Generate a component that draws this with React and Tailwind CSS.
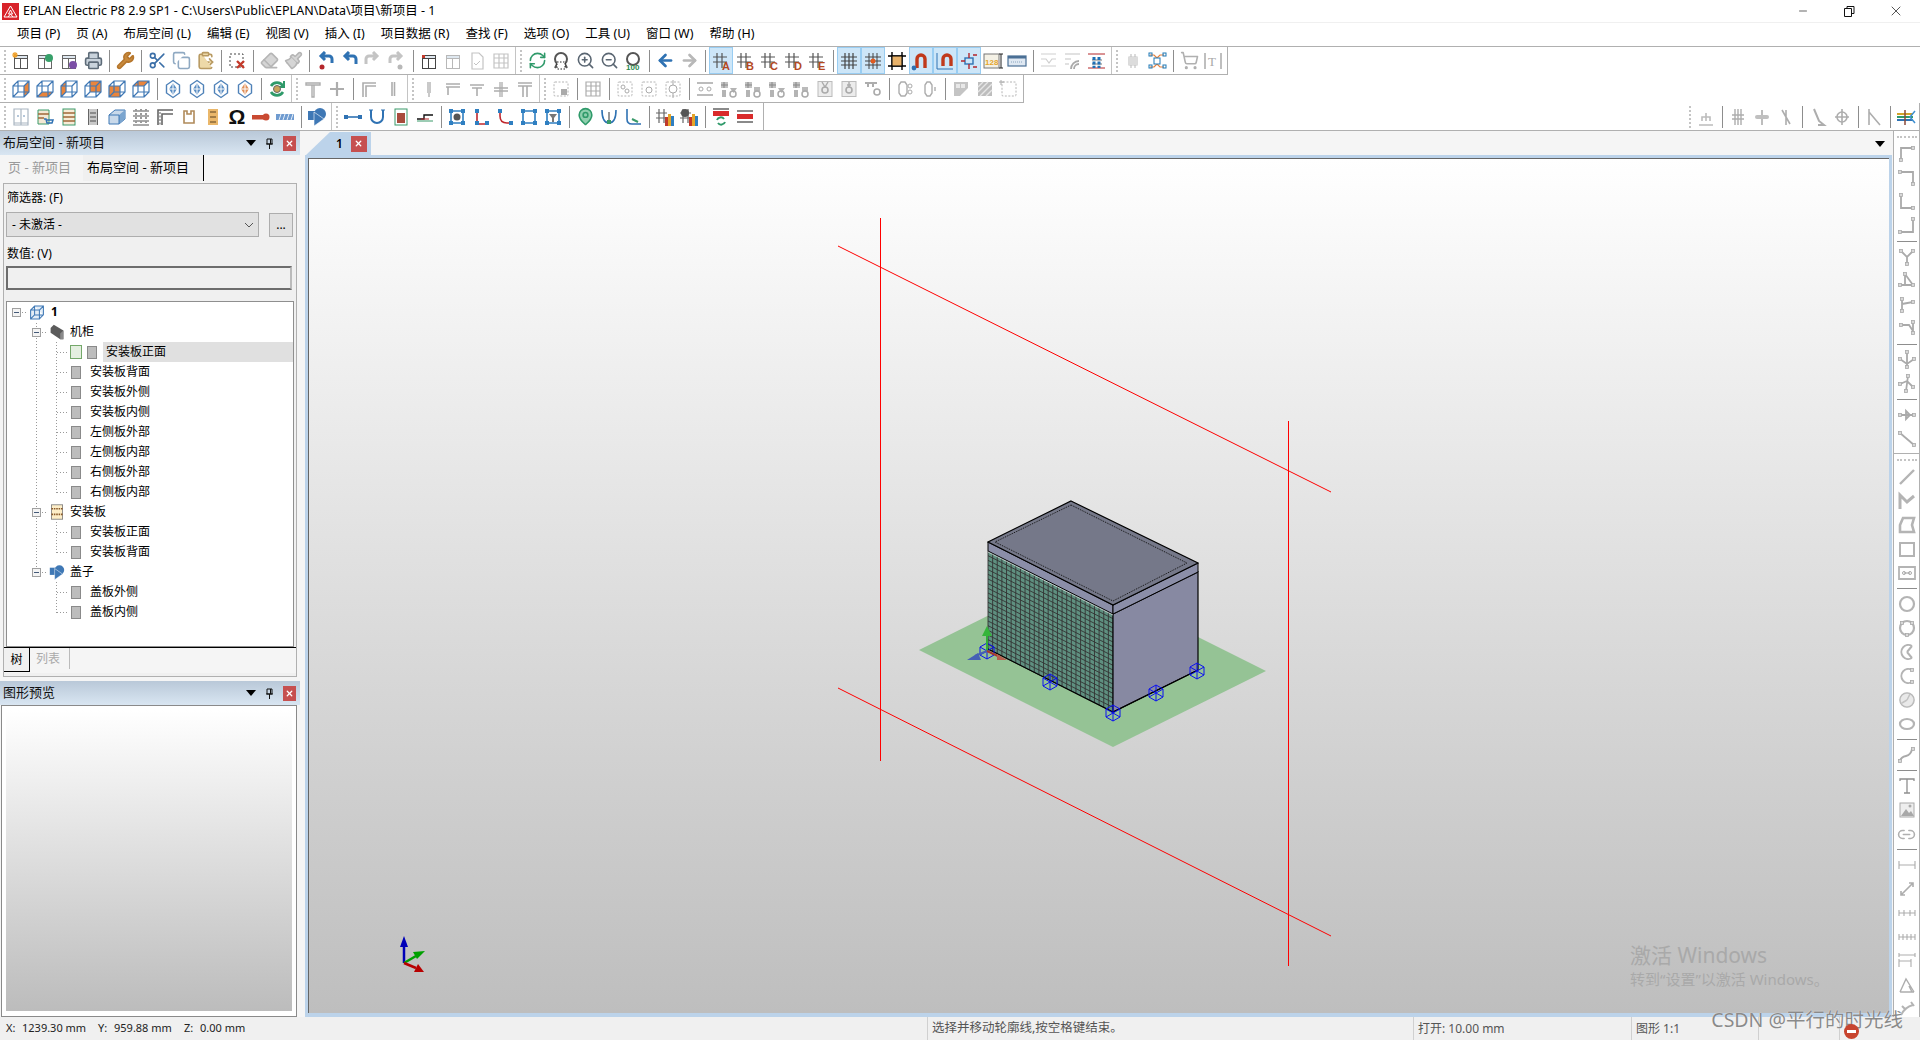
import {
  Printer, Wrench, Scissors, Copy, ClipboardPaste, Eraser, Paintbrush, RefreshCw,
  ZoomIn, ZoomOut, ArrowLeft, ArrowRight, MapPin, ShoppingCart, Link2, Minus, X,
} from "lucide-react";

const uiFont = "font-['Noto_Sans','Noto_Sans_CJK_SC',sans-serif]";

const Svg = ({ children, s = 20 }) => (
  <svg viewBox="0 0 20 20" width={s} height={s} fill="none" className="block">
    {children}
  </svg>
);

// gray line icon, most of the disabled toolbar buttons are this
const G = ({ d, c = "#adadad", w = 1.6, children }) => (
  <Svg>
    <path d={d} stroke={c} strokeWidth={w} />
    {children}
  </Svg>
);

const L = (Icon, color, fill = "none") => <Icon size={19} color={color} fill={fill} strokeWidth={2} />;

const Win = ({ mark, c = "#666" }) => (
  <Svg>
    <rect x="3.5" y="4.5" width="13" height="13" fill="#fff" stroke={c} />
    <rect x="3.5" y="4.5" width="13" height="3" fill="#dfe8f0" stroke={c} />
    <path d="M9.5 7.5v10" stroke={c} />
    {mark}
  </Svg>
);

const GridL = ({ l, c = "#b5491e" }) => (
  <Svg>
    <path d="M2 6h14M2 11h14M6 2v15M11 2v15" stroke="#555" strokeWidth="1.2" />
    <text x="11" y="19" fontSize="11" fontWeight="700" fill={c} fontFamily="Liberation Sans">
      {l}
    </text>
  </Svg>
);

const faces = {
  right: "13,7 18,2 18,13 13,18",
  left: "2,7 7,2 7,13 2,18",
  bottom: "2,18 7,13 18,13 13,18",
  back: "7,2 18,2 18,13 7,13",
  front: "2,7 13,7 13,18 2,18",
  top: "2,7 7,2 18,2 13,7",
};

const Cube = ({ f }) => (
  <Svg>
    {f && <polygon points={faces[f]} fill="#e9853c" />}
    <path d="M2 7h11v11H2zM2 7l5-5h11v11l-5 5M13 7l5-5M7 2v11H18M7 13l-5 5" stroke="#3f78b5" strokeWidth="1.2" />
  </Svg>
);

const Hex = ({ f = "0" }) => (
  <Svg>
    <polygon points="10,1.5 16.5,6 16.5,14 10,18.5 3.5,14 3.5,6" stroke="#4f82b8" strokeWidth="1.4" fill="#fff" />
    <polygon points="10,4 14,10 10,16 6,10" fill={f === "0" ? "#5c8fc4" : "#e0905a"} />
    <path d="M6 10h8M10 4v12" stroke="#fff" />
  </Svg>
);

const Shapes = ({ s = 20 }) => (
  <Svg s={s}>
    <rect x="1" y="4" width="9" height="9" fill="#3f78b5" />
    <circle cx="13" cy="7" r="6" fill="#3f78b5" />
    <polygon points="7,5 7,19 17,12" fill="#3f78b5" stroke="#fff" strokeWidth=".6" />
  </Svg>
);

const Bracket = ({ k }) => (
  <Svg>
    <path
      d={{ a: "M4 4v12h12V4H4z", b: "M6 3v14h10", d: "M4 4h12v12H4z", e: "M4 4h12v12H4z" }[k]}
      stroke={k === "b" ? "#c0272d" : "#2f7fc1"}
      strokeWidth="1.6"
    />
    {(k === "b" ? [[6, 4], [6, 16], [16, 16]] : [[4, 4], [16, 4], [4, 16], [16, 16]]).map(([x, y], i) => (
      <rect key={i} x={x - 2} y={y - 2} width="4" height="4" fill="#2f7fc1" />
    ))}
    {k === "a" && <circle cx="10" cy="10" r="3.5" fill="#555" />}
    {k === "e" && <polygon points="6,7 14,7 11,11 11,15 9,15 9,11" fill="#777" />}
  </Svg>
);

const Dash = ({ children }) => (
  <Svg>
    <rect x="3" y="3" width="14" height="14" rx="1" stroke="#b4b4b4" strokeDasharray="2 1.5" />
    {children}
  </Svg>
);

const Sym = ({ inner }) => (
  <Svg>
    <rect x="3" y="2.5" width="14" height="15" fill="#ececec" stroke="#bbb" />
    <circle cx="10" cy="11" r="3" stroke="#aaa" strokeWidth="1.6" />
    <path d={inner || "M7 3l3 5 3-5"} stroke="#aaa" strokeWidth="1.4" />
  </Svg>
);

const Mix = ({ k }) => (
  <Svg>
    <rect x="2" y="3" width="7" height="6" fill="#c2c2c2" />
    <path d="M2 6h7M5 3v6" stroke="#888" />
    {k > 1 ? <path d="M11 9h7l-3.5 5z" fill="#b4b4b4" /> : <rect x="11" y="8" width="6" height="4" fill="#bbb" />}
    <circle cx="14" cy="15" r="3" stroke="#aaa" strokeWidth="1.5" />
    <rect x="3" y="11" width="4" height="7" fill="#b4b4b4" />
  </Svg>
);

const Panel2 = ({ c = "#d92b2b" }) => (
  <Svg>
    <path d="M2 4h16" stroke="#8a8a8a" strokeWidth="2" />
    <rect x="2" y="7" width="16" height="5" fill={c} />
    <path d="M2 15h16" stroke="#8a8a8a" strokeWidth="2" />
  </Svg>
);

const Bars = ({ gear }) => (
  <Svg>
    <path d="M1 6h11M1 11h11M4 2v14M9 2v14" stroke="#666" strokeWidth="1.2" />
    {gear && <circle cx="6" cy="6" r="4" fill="#555" />}
    <rect x="10" y="10" width="3" height="9" fill="#c0392b" />
    <rect x="13" y="7" width="3" height="12" fill="#e5a52a" />
    <rect x="16" y="9" width="3" height="10" fill="#2f7fc1" />
  </Svg>
);

const SEP = "sep";
const GRIP = "grip";

const row1 = [
  [
    <Win c="#555" mark={<path d="M4 1v6M1 4h6M2 2l4 4M6 2L2 6" stroke="#eea02a" strokeWidth="1.2" />} />,
    <Win mark={<circle cx="14" cy="7" r="4" fill="#37a06a" />} />,
    <Win mark={<circle cx="14" cy="14" r="4" fill="#7b4fa6" />} />,
    L(Printer, "#5d6b78", "#c9d3dc"),
    SEP,
    L(Wrench, "#b5762c", "#c98a3c"),
    SEP,
    L(Scissors, "#3b6fa8"),
    L(Copy, "#8fa9c2", "#fff"),
    L(ClipboardPaste, "#b89a62", "#edd9a8"),
    SEP,
    <Svg>
      <rect x="3" y="3" width="13" height="13" stroke="#444" strokeDasharray="2 2" />
      <path d="M10 10l7 7M17 10l-7 7" stroke="#c43a2a" strokeWidth="2.4" />
    </Svg>,
    SEP,
    L(Eraser, "#b5b5b5", "#d5d5d5"),
    L(Paintbrush, "#b5b5b5", "#d5d5d5"),
    SEP,
    <Svg>
      <path d="M17 12V8a3 3 0 0 0-3-3H7M10 1L6 5l4 4" stroke="#2f72b3" strokeWidth="3" />
      <circle cx="7" cy="16" r="2.5" fill="#b4262b" />
    </Svg>,
    <Svg>
      <path d="M17 13V8a3 3 0 0 0-3-3H7M10 1L6 5l4 4" stroke="#2f72b3" strokeWidth="3" />
    </Svg>,
    <Svg>
      <path d="M3 13V8a3 3 0 0 1 3-3h7M10 1l4 4-4 4" stroke="#c4c4c4" strokeWidth="3" />
    </Svg>,
    <Svg>
      <path d="M3 12V8a3 3 0 0 1 3-3h7M10 1l4 4-4 4" stroke="#c4c4c4" strokeWidth="3" />
      <circle cx="13" cy="16" r="2.5" fill="#b8b8b8" />
    </Svg>,
    SEP,
    <Win c="#444" mark={<rect x="3" y="4" width="3" height="3" fill="#c43a2a" />} />,
    <Win c="#b8b8b8" />,
    <G d="M5 2h7l4 4v12H5z" c="#c4c4c4" w={1.2}>
      <path d="M7 12l2 2 4-4" stroke="#c4c4c4" />
    </G>,
    <G d="M3 3h14v14H3zM3 7h14M3 12h14M8 3v14M13 3v14" c="#c4c4c4" w={1.2} />,
  ],
  [
    L(RefreshCw, "#2f9a6a"),
    <Svg>
      <circle cx="10" cy="8" r="6" stroke="#555" strokeWidth="2" />
      <path d="M4 17l2-4M16 17l-2-4" stroke="#555" strokeWidth="2" />
      <rect x="6" y="11" width="8" height="7" fill="#fff" stroke="#222" strokeDasharray="1.5 1.5" />
    </Svg>,
    L(ZoomIn, "#5a6672"),
    L(ZoomOut, "#5a6672"),
    <Svg>
      <circle cx="10" cy="8" r="6" stroke="#555" strokeWidth="2" />
      <text x="3" y="19" fontSize="8" fontWeight="700" fill="#2b8a4e" fontFamily="Liberation Sans">100</text>
    </Svg>,
    SEP,
    <ArrowLeft size={19} color="#2f72b3" strokeWidth={3.4} />,
    <ArrowRight size={19} color="#b8b8b8" strokeWidth={3.4} />,
    SEP,
    { el: <GridL l="A" />, active: true },
    <GridL l="B" />,
    <GridL l="C" />,
    <GridL l="D" />,
    <GridL l="E" />,
    SEP,
    { el: <G d="M2 6h16M2 10h16M2 14h16M6 2v16M10 2v16M14 2v16" c="#444" w={1.2} />, active: true },
    {
      el: (
        <G d="M2 6h16M2 10h16M2 14h16M6 2v16M10 2v16M14 2v16" c="#444" w={1}>
          <circle cx="10" cy="10" r="2.5" fill="#e05a1f" />
        </G>
      ),
      active: true,
    },
    <G d="M5 5h10v10H5zM5 1v18M15 1v18M1 5h18M1 15h18" c="#000" w={1.4}>
      <rect x="5" y="5" width="10" height="10" fill="#e8b26a" stroke="#000" />
    </G>,
    { el: <Svg><path d="M6 17V8a4 4 0 0 1 8 0v9" stroke="#c0391b" strokeWidth="3.4" /><circle cx="3" cy="17" r="2.4" fill="#2f72b3" /></Svg>, active: true },
    { el: <Svg><path d="M2 2v16h16" stroke="#2f72b3" /><path d="M8 15V8a4 4 0 0 1 8 0v7" stroke="#c0391b" strokeWidth="3.4" /></Svg>, active: true },
    { el: <Svg><rect x="6" y="7" width="8" height="6" stroke="#2f72b3" strokeWidth="1.4" /><path d="M10 2v5M10 13v5M14 4h4M14 16h4M2 10h4" stroke="#b4262b" strokeWidth="1.4" /></Svg>, active: true },
    <Svg>
      <rect x="1" y="3" width="15" height="14" fill="#f4f1e6" stroke="#777" />
      <text x="2" y="14" fontSize="8" fontWeight="700" fill="#e5a52a" fontFamily="Liberation Sans">128</text>
      <path d="M18 3v14M16 3h4M16 17h4" stroke="#222" />
    </Svg>,
    <Svg>
      <rect x="1" y="5" width="18" height="10" fill="#dfe8f2" stroke="#4a6f95" strokeWidth="1.2" />
      <rect x="1" y="5" width="18" height="2.5" fill="#4a6f95" />
      <path d="M4 11h12" stroke="#8aa5bf" strokeDasharray="1 1" />
    </Svg>,
    SEP,
    <G d="M2 3h15M2 8h5l3 4 3-4h4M2 15h15" c="#cfcfcf" w={1.2} />,
    <G d="M2 3h15M2 8h6M2 13h4" c="#c4c4c4" w={1.2}>
      <path d="M8 18a8 8 0 0 1 8-8M11 18a5 5 0 0 1 5-5" stroke="#aaa" strokeWidth="1.8" />
    </G>,
    <Svg>
      <path d="M1 3h17M1 17h17" stroke="#b4262b" />
      <path d="M5 9h10M5 13h10" stroke="#777" />
      <path d="M7 6v11M12 6v11" stroke="#1f6fb5" strokeWidth="3" strokeDasharray="3 1.4" />
    </Svg>,
  ],
  [
    <G d="M6 6h8v8H6zM8 3v3M12 3v3M8 14v3M12 14v3" c="#c4c4c4" w={1.2}>
      <rect x="6" y="6" width="8" height="8" fill="#dcdcdc" />
    </G>,
    <Svg>
      <path d="M3 4h4l3 3M17 4h-4l-3 3M3 16h4l3-3M17 16h-4l-3-3" stroke="#e8803a" strokeWidth="1.2" />
      <rect x="7" y="7" width="6" height="6" fill="#fff" stroke="#1f78b5" />
      {[[2, 3], [16, 3], [2, 15], [16, 15]].map(([x, y], i) => (
        <rect key={i} x={x} y={y - 1} width="3" height="3" stroke="#1f78b5" />
      ))}
    </Svg>,
    SEP,
    L(ShoppingCart, "#b0b0b0"),
    <G d="M2 2v16M18 2v16" c="#aaa" w={1.5}>
      <text x="5" y="15" fontSize="13" fill="#a8a8a8" fontFamily="Liberation Serif">T</text>
    </G>,
  ],
];

const row2 = [
  [
    <Cube f="right" />,
    <Cube f="bottom" />,
    <Cube f="left" />,
    <Cube f="back" />,
    <Cube f="front" />,
    <Cube f="top" />,
    SEP,
    <Hex />,
    <Hex />,
    <Hex />,
    <Hex f="1" />,
    SEP,
    <Svg>
      <path d="M16 7a7 7 0 0 0-12 0M4 13a7 7 0 0 0 12 0" stroke="#2f9a6a" strokeWidth="2.6" />
      <path d="M17 2v6h-6" stroke="#2f9a6a" strokeWidth="2" />
      <circle cx="10" cy="10" r="3.5" fill="#c9a45a" stroke="#666" />
    </Svg>,
  ],
  [
    <G d="M3 4h14v2H3zM9 6v12h2V6" w={1.4} />,
    <G d="M3 10h14M10 3v14" w={2.2} />,
    SEP,
    <G d="M4 18V4h13M7 18V7h10" />,
    <G d="M9 3v14M11.500 3v14" />,
  ],
  [
    <G d="M9 3v11M11 3v11M10 14v4" w={1.3} />,
    <G d="M3 5h14M3 8h14M5 8v8" />,
    <G d="M3 6h14M5 9h10M10 9v8" />,
    <G d="M3 9h14M3 12h14M9 3v15M11 3v15" w={1.3} />,
    <G d="M3 4h14M3 7h14M8 7v11M12 7v11" />,
  ],
  [
    <Dash>
      <rect x="10" y="10" width="6" height="6" fill="#aaa" />
    </Dash>,
    SEP,
    <G d="M3 3h14v14H3zM3 7h14M8 3v14M13 3v14M3 12h14" w={1.2} />,
    SEP,
    <Dash>
      <circle cx="8" cy="8" r="2" stroke="#aaa" />
      <circle cx="12" cy="12" r="2" stroke="#aaa" />
    </Dash>,
    <Dash>
      <circle cx="10" cy="11" r="3" stroke="#aaa" />
    </Dash>,
    <Dash>
      <circle cx="10" cy="10" r="4" stroke="#aaa" />
      <path d="M10 1v5M10 14v5" stroke="#aaa" />
    </Dash>,
    SEP,
    <G d="M2 4h16M2 16h16" w={2} c="#bcbcbc">
      <circle cx="6" cy="10" r="2" stroke="#aaa" />
      <circle cx="14" cy="10" r="2" stroke="#aaa" />
    </G>,
    <Mix k={2} />,
    <Mix k={1} />,
    <Mix k={2} />,
    <Mix k={1} />,
    <Sym />,
    <Sym inner="M10 3v5M8 6h4" />,
    <G d="M2 4h12M5 4v4M10 4v4" w={2}>
      <circle cx="14" cy="13" r="3" stroke="#aaa" strokeWidth="1.6" />
    </G>,
    SEP,
    <G d="M6 3h4l2 3v8l-2 3H6l-2-3V6z" w={1.4}>
      <circle cx="15" cy="7" r="2" stroke="#aaa" />
      <circle cx="15" cy="13" r="2" stroke="#aaa" />
    </G>,
    <G d="M8 3h3l2 3v8l-2 3H8l-2-3V6zM16 8v4" w={1.4} />,
    SEP,
    <Svg>
      <polygon points="3,3 17,3 17,9 9,17 3,17" fill="#c4c4c4" />
      <rect x="5" y="5" width="4" height="4" fill="#e8e8e8" />
      <rect x="10" y="5" width="4" height="4" fill="#e8e8e8" />
    </Svg>,
    <Svg>
      <rect x="3" y="3" width="14" height="14" fill="#bdbdbd" />
      <path d="M3 13L13 3M5 17L17 5M3 8l5-5M11 17l6-6" stroke="#e6e6e6" strokeWidth="1.4" />
    </Svg>,
    <Dash>
      <path d="M2 1v5M0 3h5" stroke="#aaa" />
    </Dash>,
  ],
];

const row3 = [
  [
    <G d="M3 2h14v16H3zM10 2v16M3 16h14" c="#aab6c2" w={1.2}>
      <path d="M6 9h2M12 9h2" stroke="#6b8fb5" />
    </G>,
    <Svg>
      <path d="M3 3h11v14H3z" fill="#f3e8d4" stroke="#3a9a6a" />
      <path d="M3 7h11M3 11h6" stroke="#a0683a" strokeWidth="1.5" />
      <path d="M9 12h2l1 4h5l1-3h-6" stroke="#2f72b3" strokeWidth="1.5" />
    </Svg>,
    <Svg>
      <rect x="4" y="2" width="12" height="16" fill="#f7ecd8" stroke="#3a9a6a" />
      <path d="M4 6h12M4 10h12M4 14h12" stroke="#a0683a" strokeWidth="1.6" />
    </Svg>,
    <G d="M6 2v16M14 2v16" c="#666" w={2}>
      <rect x="6" y="2" width="8" height="16" fill="#c9c9c9" />
      <path d="M7 6h6M7 10h6M7 14h6" stroke="#777" strokeWidth="1.4" />
    </G>,
    <Svg>
      <polygon points="2,8 8,3 18,3 18,12 12,17 2,17" fill="#c9d9ea" stroke="#3f78b5" />
      <polygon points="12,8 18,3 18,12 12,17" fill="#7ba5cf" />
      <path d="M2 8h10v9" stroke="#3f78b5" />
    </Svg>,
    <G d="M2 4h16M2 9h16M2 14h16M2 18h16" c="#555" w={1.2}>
      <path d="M5 2v16M10 2v16M15 2v16" stroke="#999" strokeDasharray="2 2" strokeWidth="2" />
    </G>,
    <G d="M3 18V3h15M7 18V7h11" c="#666" w={1.6}>
      <path d="M5 5v13" stroke="#999" strokeDasharray="2 1.5" strokeWidth="1.6" />
    </G>,
    <G d="M5 4h3v3h4V4h3v12H5z" c="#b08a5a" w={1.6} />,
    <Svg>
      <rect x="5" y="2" width="10" height="16" fill="#eab76a" />
      <path d="M7 5h6M7 10h6M7 15h6" stroke="#8a6a3a" strokeWidth="1.5" />
    </Svg>,
    <span className="text-[21px] leading-none text-[#111] font-['Liberation_Sans',sans-serif] font-bold">Ω</span>,
    <Svg>
      <rect x="1" y="8" width="13" height="4.500" fill="#c94a32" />
      <circle cx="15" cy="10" r="3.500" fill="#c94a32" />
    </Svg>,
    <Svg>
      <rect x="1" y="7" width="18" height="6" fill="#6f9bd0" />
      <path d="M4 13l2-6M8 13l2-6M12 13l2-6M16 13l2-6" stroke="#e4eef8" />
    </Svg>,
    SEP,
    <Shapes />,
  ],
  [
    <Svg>
      <path d="M3 10h14" stroke="#2f72b3" strokeWidth="1.6" />
      <rect x="1" y="8" width="4" height="4" fill="#2f72b3" />
      <rect x="15" y="8" width="4" height="4" fill="#2f72b3" />
    </Svg>,
    <Svg>
      <path d="M4 3v7a6 6 0 0 0 12 0V3" stroke="#2f72b3" strokeWidth="2" />
      <path d="M2 3h4M14 3h4" stroke="#2f72b3" />
    </Svg>,
    <Svg>
      <rect x="4" y="2" width="12" height="16" fill="#fff" stroke="#3a9a6a" />
      <rect x="6" y="6" width="8" height="10" fill="#a84b3c" />
    </Svg>,
    <Svg>
      <path d="M2 12h7V8h9" stroke="#111" strokeWidth="1.4" />
      <path d="M2 14h16" stroke="#3a9a6a" />
      <path d="M6 12h8" stroke="#b4262b" />
    </Svg>,
    SEP,
    <Bracket k="a" />,
    <Bracket k="b" />,
    <Svg>
      <path d="M5 3v6q0 7 7 7h5" stroke="#c0272d" strokeWidth="1.6" />
      <rect x="3" y="2" width="4" height="4" fill="#2f7fc1" />
      <rect x="14" y="14" width="4" height="4" fill="#2f7fc1" />
    </Svg>,
    <Bracket k="d" />,
    <Bracket k="e" />,
    SEP,
    L(MapPin, "#2f9a6a", "#8fcfae"),
    <Svg>
      <path d="M3 3q0 13 7 13t7-13" stroke="#2f72b3" strokeWidth="1.6" />
      <path d="M10 5v8" stroke="#333" />
      <rect x="8" y="13" width="4" height="4" fill="#3a9a6a" />
    </Svg>,
    <Svg>
      <path d="M4 2v10q0 5 5 5h9" stroke="#2f72b3" strokeWidth="1.6" />
      <path d="M9 12l6 3" stroke="#3a9a6a" strokeWidth="2" />
    </Svg>,
    SEP,
    <Bars />,
    <Bars gear />,
    SEP,
    <Svg>
      <path d="M2 2h16" stroke="#8a8a8a" strokeWidth="2" />
      <rect x="2" y="4" width="16" height="5" fill="#d92b2b" />
      <path d="M6 13a4 4 0 0 1 7-1M14 15a4 4 0 0 1-7 1" stroke="#2f9a6a" strokeWidth="2" />
    </Svg>,
    <Panel2 />,
  ],
];

const rightTop = [
  <G d="M3 18h14M10 6v8M6 14V10h8v4" c="#bcbcbc" w={1.6} />,
  SEP,
  <G d="M7 2v16M10 2v16M13 2v16M4 8h12M4 12h12" w={1.4} />,
  <G d="M10 3v15" w={1.6}>
    <rect x="3" y="8" width="14" height="4" rx="2" fill="#c0c0c0" />
  </G>,
  <G d="M6 3l8 14M10 3v15" w={1.6} />,
  SEP,
  <G d="M6 2l5 12 5 4H10" c="#adadad" w={2} />,
  <G d="M10 2v16M3 10h14" w={1.6}>
    <circle cx="10" cy="10" r="5" stroke="#adadad" strokeWidth="1.6" />
  </G>,
  SEP,
  <G d="M5 2v16M5 5l11 13" w={1.6} />,
  SEP,
  <Svg>
    <path d="M1 7h16" stroke="#d4a32a" strokeWidth="2" />
    <path d="M1 10h16" stroke="#2f9a6a" strokeWidth="2" />
    <path d="M1 13h16" stroke="#2f72b3" strokeWidth="2" />
    <path d="M9 3v15" stroke="#8a4a3a" strokeWidth="1.5" />
    <path d="M19 4l-5 6 5 6" stroke="#3f8fd0" strokeWidth="1.5" />
  </Svg>,
];

const end = (x, y) => <rect x={x - 1.5} y={y - 1.5} width="3" height="3" fill="#d8d8d8" stroke="#aaa" strokeWidth=".8" />;

const Seg = ({ d, pts = [] }) => (
  <Svg>
    <path d={d} stroke="#aaa" strokeWidth="1.8" />
    {pts.map(([x, y], i) => (
      <g key={i}>{end(x, y)}</g>
    ))}
  </Svg>
);

const rightCol = [
  [
    <Seg d="M4 16V4h12" pts={[[4, 16], [16, 4]]} />,
    <Seg d="M3 4h13v12" pts={[[3, 4], [16, 16]]} />,
    <Seg d="M4 3v13h12" pts={[[4, 3], [16, 16]]} />,
    <Seg d="M3 16h13V3" pts={[[3, 16], [16, 3]]} />,
    SEP,
    <Seg d="M4 4l6 6 6-6M10 10v7" pts={[[4, 4], [16, 4], [10, 17]]} />,
    <Seg d="M8 3l8 11H3M8 3v11" pts={[[8, 3], [16, 14], [3, 14]]} />,
    <Seg d="M5 4v12M5 9l11-2" pts={[[5, 4], [5, 16], [16, 7]]} />,
    <Seg d="M4 6h8l4 6V3" pts={[[4, 6], [16, 3], [16, 14]]} />,
    SEP,
    <Seg d="M10 2v15M3 9l7 5 7-5" pts={[[10, 2], [3, 9], [17, 9], [10, 17]]} />,
    <Seg d="M11 2l-2 15M3 10l7-3 6 6" pts={[[11, 2], [3, 10], [9, 17], [16, 13]]} />,
    SEP,
    <Seg d="M3 10h14M9 6l4 4-4 4z" pts={[[3, 10], [17, 10]]} />,
    <Seg d="M3 4l14 12" pts={[[3, 4], [17, 16]]} />,
  ],
  GRIP,
  [
    <G d="M3 17L17 3" c="#b4b4b4" w={2.4} />,
    <G d="M3 18V4l7 7 7-6" c="#b4b4b4" w={3} />,
    <G d="M3 10l3-7h9l2 0-2 7 2 7H3z" c="#b4b4b4" w={2.6} />,
    <G d="M3 4h14v13H3z" c="#b4b4b4" w={2} />,
    <G d="M2 4h16v12H2z" c="#b4b4b4" w={1.8}>
      <path d="M7 10h6" stroke="#aaa" strokeWidth="1.2" />
      <circle cx="7" cy="10" r="1.5" stroke="#aaa" />
      <circle cx="13" cy="10" r="1.5" stroke="#aaa" />
    </G>,
    SEP,
    <G d="M3 10a7 7 0 1 0 14 0a7 7 0 1 0-14 0" c="#b4b4b4" w={2.2} />,
    <G d="M3 10a7 7 0 1 0 14 0a7 7 0 1 0-14 0" c="#b4b4b4" w={2.2}>
      {end(5, 5)}
      {end(15, 5)}
      {end(10, 17)}
    </G>,
    <G d="M15 4a7 7 0 1 0 0 12M10 10l5-6M10 10l5 6" c="#b4b4b4" w={2} />,
    <G d="M15 4a7 7 0 1 0 0 12" c="#b4b4b4" w={2}>
      {end(15, 4)}
      {end(15, 16)}
    </G>,
    <G d="M3 10a7 7 0 1 0 14 0a7 7 0 1 0-14 0M10 10l3-6M10 10l-5 3" c="#b4b4b4" w={1.6}>
      <circle cx="10" cy="10" r="7" fill="#d4d4d4" fillOpacity=".5" />
    </G>,
    <G d="M3 10a7 5 0 1 0 14 0a7 5 0 1 0-14 0" c="#b4b4b4" w={2.2} />,
    SEP,
    <Seg d="M3 16q1-4 6-5t6-7" pts={[[3, 16], [16, 4]]} />,
    SEP,
    <G d="M3 5V3h14v2M10 3v14M7 17h6" c="#8f8f8f" w={1.3} />,
    <Svg>
      <rect x="3" y="3" width="14" height="14" fill="#eee" stroke="#aaa" />
      <path d="M4 16l5-7 3 4 2-2 3 5z" fill="#a8a8a8" />
      <circle cx="13" cy="6" r="1.500" fill="#aaa" />
    </Svg>,
    L(Link2, "#b0b0b0"),
    SEP,
    <G d="M2 10h16M2 6v8M18 6v8" w={1.1} />,
    <G d="M4 16L16 4M4 12v4h4M12 4h4v4" w={1.6} />,
    <G d="M2 10h16M2 7v6M7 7v6M13 7v6M18 7v6" w={1.1} />,
    <G d="M2 10h16M2 7v6M6 7v6M10 7v6M14 7v6M18 7v6" w={1.1} />,
    <G d="M2 4h16M2 2v4M18 2v4M2 10h12M2 8v8M14 8v8" w={1.1} />,
    <G d="M3 17h14M3 17L9 4l8 13M12 11l3 6" w={1.4} />,
    <G d="M4 16q4-8 12-10M5 7l4 4M14 3l3 4" c="#b4b4b4" w={2} />,
  ],
];

const Btn = ({ item }) => {
  const el = item && item.el ? item.el : item;
  return (
    <div
      className={`flex h-[27px] w-6 shrink-0 items-center justify-center ${
        item && item.active ? "border border-[#99cdf2] bg-[#cde6f8]" : ""
      }`}
    >
      {el}
    </div>
  );
};

const Grip = () => <div className="mr-[3px] ml-1 h-[22px] w-px shrink-0 border-l-2 border-dotted border-[#c4c4c4]" />;

const Toolbar = ({ groups, tail = "w-[2px]" }) => (
  <div className="flex h-7 items-center border-r border-b border-[#b0b0b0] bg-white">
    {groups.map((g, i) => (
      <div key={i} className={`flex h-full items-center ${i < groups.length - 1 ? "border-r border-[#c4c4c4]" : ""}`}>
        <Grip />
        {g.map((item, j) =>
          item === SEP ? (
            <div key={j} className="mx-[3.5px] h-[22px] w-px shrink-0 bg-[#8d8d8d]" />
          ) : (
            <Btn key={j} item={item} />
          ),
        )}
        <div className={i < groups.length - 1 ? "w-[2px]" : tail} />
      </div>
    ))}
  </div>
);

const PanelHeader = ({ title }) => (
  <div className="flex h-6 w-[300px] shrink-0 items-center bg-gradient-to-b from-[#b9c8d8] to-[#d9e6f2] pr-1 pl-[3px]">
    <span className="flex-1 text-[13px] text-[#111]">{title}</span>
    <svg width="10" height="6" viewBox="0 0 10 6" className="mr-[9px]">
      <polygon points="0,0 10,0 5,6" fill="#000" />
    </svg>
    <svg width="9" height="11" viewBox="0 0 9 11" className="mr-[9px]">
      <path d="M2 1h5v5H2zM1 6h7M4.500 6v5M5.500 1v5" stroke="#111" fill="none" />
    </svg>
    <div className="flex h-[15px] w-[13px] items-center justify-center bg-[#c65050]">
      <X size={9} color="#fff" strokeWidth={3.5} />
    </div>
  </div>
);

const minusBox = (
  <span className="flex h-[9px] w-[9px] shrink-0 items-center justify-center border border-[#a0a0a0] bg-[#f4f4f4]">
    <span className="h-px w-[5px] bg-[#445a78]" />
  </span>
);

const swatch = <span className="block h-[13px] w-[10px] shrink-0 border border-[#8a8a8a] bg-[#bdbdbd]" />;

const Leaf = ({ label }) => (
  <div className="flex h-5 items-center pl-[64px] text-xs text-black">
    {swatch}
    <span className="ml-[9px]">{label}</span>
  </div>
);

const Branch = ({ icon, label }) => (
  <div className="flex h-5 items-center pl-[25px] text-xs text-black">
    {minusBox}
    <span className="ml-2 flex w-[16px] shrink-0 items-center justify-center">{icon}</span>
    <span className="ml-[5px]">{label}</span>
  </div>
);

const stubs = [50, 70, 90, 110, 130, 150, 170, 190, 230, 250, 290, 310].map((y) => `M50 ${y}.5h11`).join("");

const TreePanel = () => (
  <div className="relative h-[346px] border border-[#8f8f8f] bg-white">
    <svg className="pointer-events-none absolute top-0 left-0" width="90" height="320" fill="none">
      <path
        d={`M15 10.500h6M35 30.500h6M35 210.500h6M35 270.500h6M29.500 21v4M29.500 36v169M29.500 216v49M49.500 40V191M49.500 220v31M49.500 280v31${stubs}`}
        stroke="#999"
        strokeDasharray="1 2"
      />
    </svg>
    <div className="flex h-5 items-center pl-[5px] text-xs font-bold">
      {minusBox}
      <span className="ml-2 flex w-[16px] shrink-0 items-center justify-center">
        <Svg s={17}>
          <path d="M2 7h11v11H2zM2 7l5-5h11v11l-5 5M13 7l5-5M7 2v11H18M7 13l-5 5" stroke="#3f78b5" strokeWidth="1.3" fill="#e2ecf6" />
        </Svg>
      </span>
      <span className="ml-[6px]">1</span>
    </div>
    <Branch
      icon={
        <Svg s={16}>
          <polygon points="2,5 6,1 18,8 18,19 14,19 2,11" fill="#5b5b5b" />
          <polygon points="14,12 18,8 18,19 14,19" fill="#8a8a8a" />
        </Svg>
      }
      label="机柜"
    />
    <div className="flex h-5 items-center pl-[63px] text-xs text-black">
      <span className="h-[14px] w-[12px] shrink-0 border border-[#74a86a] bg-[#e4efe0]" />
      <span className="mr-[6px] ml-[5px] flex shrink-0">{swatch}</span>
      <span className="relative z-10 flex h-full flex-1 items-center bg-[#e0e0e0] pl-[3px]">安装板正面</span>
    </div>
    {["安装板背面", "安装板外侧", "安装板内侧", "左侧板外部", "左侧板内部", "右侧板外部", "右侧板内部"].map((t) => (
      <Leaf key={t} label={t} />
    ))}
    <Branch
      icon={
        <Svg s={16}>
          <rect x="3" y="1" width="14" height="18" fill="#fdeec8" stroke="#777" />
          <path d="M3 6h14M3 13h14" stroke="#8a5a2a" strokeWidth="2" strokeDasharray="2 1" />
        </Svg>
      }
      label="安装板"
    />
    <Leaf label="安装板正面" />
    <Leaf label="安装板背面" />
    <Branch icon={<Shapes s={17} />} label="盖子" />
    <Leaf label="盖板外侧" />
    <Leaf label="盖板内侧" />
  </div>
);

const LeftPanel = () => (
  <div className="flex w-[305px] shrink-0 flex-col">
    <PanelHeader title="布局空间 - 新项目" />
    <div className="flex h-[26px] w-[300px] items-center text-[13px]">
      <span className="w-[83px] pl-2 text-[#9a9a9a]">页 - 新项目</span>
      <span className="flex h-full w-[121px] items-center border-r border-black bg-[#f0f0f0] pl-[4px] text-black">
        布局空间 - 新项目
      </span>
    </div>
    <div className="mt-[2px] ml-[3px] flex h-[494px] w-[294px] flex-col border border-[#b0b0b0] bg-[#f0f0f0]">
      <div className="px-[2px]">
        <div className="flex h-[28px] items-center pl-[1px] text-xs">筛选器: (F)</div>
        <div className="flex items-center">
          <div className="flex h-[25px] w-[253px] items-center justify-between border border-[#adadad] bg-[#e1e1e1] pr-1 pl-[5px] text-xs">
            - 未激活 -
            <svg width="10" height="6" viewBox="0 0 10 6" fill="none">
              <path d="M1 1l4 4 4-4" stroke="#555" />
            </svg>
          </div>
          <div className="ml-[10px] flex h-6 w-6 items-center justify-center border border-[#adadad] bg-[#e1e1e1] text-xs">...</div>
        </div>
        <div className="mt-[5px] flex h-[24px] items-center pl-[1px] text-xs">数值: (V)</div>
        <div className="h-[24px] w-[286px] border-2 border-[#6d6d6d] border-r-[#bbb] border-b-[#6d6d6d] bg-[#f0f0f0]" />
        <div className="mt-[11px] w-[288px]">
          <TreePanel />
        </div>
      </div>
      <div className="flex h-[26px] items-start border-t border-black bg-[#f5f5f5] text-xs">
        <span className="flex h-[24px] w-[26px] items-center justify-center border-r border-b border-black bg-[#f0f0f0]">树</span>
        <span className="ml-[6px] flex h-[21px] w-[34px] items-center border-r border-[#bbb] text-[#aaa]">列表</span>
      </div>
    </div>
    <div className="mt-1">
      <PanelHeader title="图形预览" />
    </div>
    <div className="ml-[1px] flex-1 w-[296px] border border-[#8a8a8a] bg-white p-[4px] pb-[5px]">
      <div className="h-full w-full bg-gradient-to-b from-white to-[#bcbcbc]" />
    </div>
  </div>
);

const wireCube = (x, y, i) => (
  <g key={i} stroke="#0a10f0" strokeWidth="1" fill="none">
    <polygon points={`${x},${y - 8} ${x + 7},${y - 4} ${x + 7},${y + 4} ${x},${y + 8} ${x - 7},${y + 4} ${x - 7},${y - 4}`} />
    <path d={`M${x - 7} ${y - 4}L${x} ${y}L${x + 7} ${y - 4}M${x} ${y}v8M${x} ${y - 8}v8M${x - 7} ${y + 4}L${x} ${y}L${x + 7} ${y + 4}`} />
  </g>
);

const Scene = () => {
  const cols = Array.from({ length: 28 }, (_, i) => i);
  const rows = Array.from({ length: 22 }, (_, j) => j);
  return (
    <svg viewBox="309 159 1580 854" className="block h-full w-full" preserveAspectRatio="none">
      <g stroke="#ff0000" strokeWidth="1" fill="none">
        <path d="M838 246L1331 492M838 688L1331 936M880.500 218V761M1288.500 421V966" />
      </g>
      <polygon points="919,650 1113,747 1266,671 1072,574" fill="#95c395" />
      <polygon points="988,551 1113,614 1113,712 988,649" fill="#5f9080" />
      <g stroke="#333" strokeWidth=".9">
        {cols.map((i) => (
          <line key={i} x1={988 + (125 * i) / 27} y1={551 + (63 * i) / 27} x2={988 + (125 * i) / 27} y2={649 + (63 * i) / 27} />
        ))}
        {rows.map((j) => (
          <line key={j} x1={988} y1={551 + (98 * j) / 21} x2={1113} y2={614 + (98 * j) / 21} />
        ))}
      </g>
      <polygon points="1113,614 1198,572 1198,670 1113,712" fill="#8789a2" stroke="#000" strokeWidth="1.2" />
      <polygon points="988,542 1113,605 1113,614 988,551" fill="#8b8ea8" stroke="#000" />
      <polygon points="1113,605 1198,563 1198,572 1113,614" fill="#8b8ea8" stroke="#000" />
      <polygon points="1071,501 1198,563 1113,605 988,542" fill="#757889" stroke="#000" strokeWidth="1.2" />
      <polygon points="1071,505 1187,563 1113,601 995,542" fill="none" stroke="#111" strokeDasharray="1 1" />
      <path d="M988 649L1113 712L1198 670" stroke="#000" fill="none" strokeWidth="1.2" />
      <path d="M988 552L1113 615" stroke="#fff" strokeWidth=".6" />
      {[[987, 651], [1050, 682], [1113, 713], [1156, 693], [1197, 671]].map(([x, y], i) => wireCube(x, y, i))}
      <path d="M987 651V634" stroke="#2fae3a" strokeWidth="2" />
      <polygon points="987,626 982,636 992,636" fill="#35b53a" />
      <path d="M987 651L975 656" stroke="#4560b5" strokeWidth="2" />
      <polygon points="967,660 978,653 981,660" fill="#4560b5" />
      <path d="M987 651L1000 657" stroke="#a8392f" strokeWidth="2" />
      <polygon points="1007,660 997,654 997,660" fill="#b5604f" />
      <path d="M404 963V945" stroke="#0000b8" strokeWidth="2.500" />
      <polygon points="404,936 400,947 408,947" fill="#0000b8" />
      <path d="M404 963L416 956" stroke="#00a000" strokeWidth="2.500" />
      <polygon points="425,951 413,952 417,959" fill="#00a000" />
      <path d="M404 963L416 968" stroke="#b80000" strokeWidth="2.500" />
      <polygon points="424,972 414,972 418,964" fill="#b80000" />
    </svg>
  );
};

const DocArea = () => (
  <div className="flex w-[1587px] shrink-0 flex-col">
    <div className="flex h-6 shrink-0 items-end justify-between bg-[#f5f5f5] pr-[7px]">
      <div className="relative ml-[1px] flex h-[23px] w-[65px] items-center bg-[#bcd3ea] [clip-path:polygon(24px_0,100%_0,100%_100%,0_100%)]">
        <span className="ml-[30px] text-xs font-semibold text-black">1</span>
        <span className="ml-[8px] flex h-4 w-4 items-center justify-center bg-[#c65050]">
          <X size={9} color="#fff" strokeWidth={3.5} />
        </span>
      </div>
      <svg width="10" height="6" viewBox="0 0 10 6" className="mb-[8px]">
        <polygon points="0,0 10,0 5,6" fill="#000" />
      </svg>
    </div>
    <div className="flex-1 border-x-[3px] border-t-[3px] border-b-4 border-[#bcd3ea] pr-0">
      <div className="relative h-full w-full overflow-hidden border-t border-l border-[#666] bg-gradient-to-b from-white to-[#bebebe]">
        <Scene />
        <div className="absolute top-[784px] left-[1321px] text-[#a9a9a9]">
          <div className="text-[21px] leading-6">激活 Windows</div>
          <div className="text-[15px] leading-6">转到“设置”以激活 Windows。</div>
        </div>
      </div>
    </div>
  </div>
);

const RightColumn = () => (
  <div className="ml-[1px] flex w-[27px] shrink-0 flex-col items-center overflow-hidden border-x border-[#b0b0b0] bg-white">
    {rightCol.map((g, i) =>
      g === GRIP ? (
        <div key={i} className="h-[3px] w-full shrink-0 border-b border-[#b0b0b0]" />
      ) : (
        <div key={i} className="flex w-full flex-col items-center">
          <div className="mt-[5px] mb-1 h-px w-[20px] shrink-0 border-t-2 border-dotted border-[#c4c4c4]" />
          {g.map((item, j) =>
            item === SEP ? (
              <div key={j} className="my-[3px] h-px w-[20px] shrink-0 bg-[#8d8d8d]" />
            ) : (
              <div key={j} className="flex h-6 w-6 shrink-0 items-center justify-center">
                {item}
              </div>
            ),
          )}
        </div>
      ),
    )}
  </div>
);

const StatusBar = () => (
  <div className="flex h-[23px] shrink-0 items-center bg-[#f0f0f0] text-[12.5px] text-[#222]">
    <div className="flex w-[927px] pl-[6px] text-[11px]">
      <span className="w-4">X:</span>
      <span className="w-[76px]">1239.30 mm</span>
      <span className="w-4">Y:</span>
      <span className="w-[70px]">959.88 mm</span>
      <span className="w-4">Z:</span>
      <span>0.00 mm</span>
    </div>
    <div className="flex h-full w-[486px] items-center border-l border-[#d0d0d0] pl-1 text-[#555]">选择并移动轮廓线,按空格键结束。</div>
    <div className="flex h-full w-[218px] items-center border-l border-[#d0d0d0] pl-1 text-xs text-[#555]">打开: 10.00 mm</div>
    <div className="flex h-full w-[127px] items-center border-l border-[#d0d0d0] pl-1 text-xs text-[#555]">图形 1:1</div>
    <div className="h-full w-[81px] border-l border-[#d0d0d0]" />
    <div className="h-full flex-1 border-l border-[#d0d0d0]" />
  </div>
);

const App = () => (
  <div className={`relative flex h-[1040px] w-[1920px] flex-col overflow-hidden bg-[#f5f5f5] text-black ${uiFont}`}>
    <div className="flex h-[23px] shrink-0 items-center justify-between border-b border-[#f0f0f0] bg-white">
      <div className="flex items-center text-[12.5px]">
        <svg width="17" height="17" viewBox="0 0 17 17" className="mr-[4px] ml-[2px]">
          <rect width="17" height="17" fill="#d8232a" />
          <path d="M8.500 3L2 14h13zM8.500 7l-2 4h4zM6 14l2.500-3 2.500 3" stroke="#fff" fill="none" />
        </svg>
        <span>EPLAN Electric P8 2.9 SP1 - C:\Users\Public\EPLAN\Data\项目\新项目 - 1</span>
      </div>
      <div className="flex items-center">
        <span className="flex w-[46px] justify-center"><Minus size={12} strokeWidth={1.2} /></span>
        <span className="flex w-[46px] justify-center">
          <svg width="11" height="11" viewBox="0 0 11 11" fill="none">
            <path d="M3 2.500V.5h7v7H8M.5 2.500h7v8h-7z" stroke="#111" />
          </svg>
        </span>
        <span className="flex w-[48px] justify-center"><X size={16} strokeWidth={1} /></span>
      </div>
    </div>
    <div className="flex h-6 shrink-0 items-center gap-[16px] border-b border-[#b0b0b0] bg-white pl-[17px] text-[12.5px]">
      {["项目 (P)", "页 (A)", "布局空间 (L)", "编辑 (E)", "视图 (V)", "插入 (I)", "项目数据 (R)", "查找 (F)", "选项 (O)", "工具 (U)", "窗口 (W)", "帮助 (H)"].map((m) => (
        <span key={m}>{m}</span>
      ))}
    </div>
    <div className="flex shrink-0 bg-white"><Toolbar groups={row1} /></div>
    <div className="flex shrink-0 bg-white"><Toolbar groups={row2} /></div>
    <div className="flex h-7 shrink-0 items-start justify-between border-b border-[#b0b0b0] bg-white">
      <Toolbar groups={row3} tail="w-[6px]" />
      <Toolbar groups={[rightTop]} tail="w-px" />
    </div>
    <div className="flex min-h-0 flex-1">
      <LeftPanel />
      <DocArea />
      <RightColumn />
    </div>
    <StatusBar />
    <div className="absolute right-[17px] bottom-[8px] text-[19.5px] leading-6 text-[#8a8a8a] [text-shadow:0_0_1px_#fff]">CSDN @平行的时光线</div>
    <div className="absolute right-[61px] bottom-[1px] flex h-[15px] w-[15px] items-center justify-center rounded-full bg-[#c8452f]">
      <span className="h-[3px] w-[9px] bg-white" />
    </div>
  </div>
);

export default App;
